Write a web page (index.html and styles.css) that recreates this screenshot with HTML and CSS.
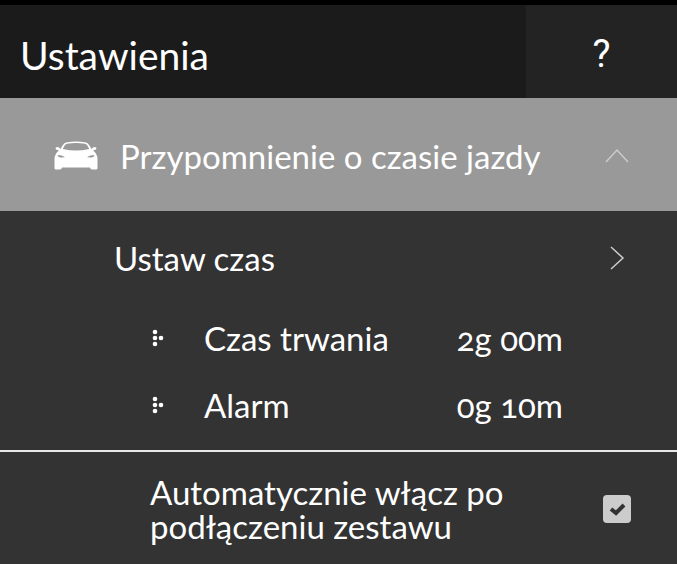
FILE: index.html
```html
<!DOCTYPE html>
<html lang="pl">

<head>
  <meta charset="UTF-8">
  <meta name="viewport" content="width=device-width, initial-scale=1.0">
  <title>Ustawienia</title>
  <link rel="stylesheet" href="styles.css">
</head>

<body>
  <header class="header">
    <h1>Ustawienia</h1>
    <button class="help" type="button">?</button>
  </header>

  <main>
    <button class="section-toggle" type="button" aria-expanded="true">
      <svg class="car" viewBox="0 0 44 30" aria-hidden="true">
        <path fill="#fff" fill-rule="evenodd" d="M12 1.500Q22 -.5 32 1.500Q34 2 35.500 4.500L37.500 8L39 6.500Q41 5.500 42.500 7L42 8.500L39 9.500Q43.500 13 43.500 18L43.500 27Q43.500 28.500 42 28.500L38 28.500Q36.500 28.500 36 26.500L8 26.500Q7.500 28.500 6 28.500L2 28.500Q.5 28.500 .5 27L.5 18Q.5 13 5 9.500L2 8.500L1.500 7Q3 5.500 5 6.500L6.500 8L8.500 4.500Q10 2 12 1.500ZM13 2.800Q11.500 3 10.300 5L8.800 8Q22 11 35.200 8L33.700 5Q32.500 3 31 2.800Q22 1.200 13 2.800ZM3.500 14Q4 16.500 6.500 16.500L11 16.300Q9 14.300 3.500 14ZM40.500 14Q35 14.300 33 16.300L37.500 16.500Q40 16.500 40.500 14Z"/>
      </svg>
      <span class="section-name">Przypomnienie o czasie jazdy</span>
      <svg class="chevron" viewBox="0 0 24 24" aria-hidden="true"><path d="M1 18L12 6L23 18"/></svg>
    </button>

    <section class="time">
      <button class="set-time" type="button">
        <span>Ustaw czas</span>
        <svg class="chevron" viewBox="0 0 24 24" aria-hidden="true"><path d="M6 1L18 12L6 23"/></svg>
      </button>
      <dl class="values">
        <div class="value-row">
          <svg class="dots" viewBox="0 0 12 18" aria-hidden="true"><circle cx="3" cy="3" r="2.300"/><circle cx="3" cy="9" r="2.300"/><circle cx="3" cy="15" r="2.300"/><circle cx="9" cy="9" r="2.300"/></svg>
          <dt>Czas trwania</dt>
          <dd>2g 00m</dd>
        </div>
        <div class="value-row">
          <svg class="dots" viewBox="0 0 12 18" aria-hidden="true"><circle cx="3" cy="3" r="2.300"/><circle cx="3" cy="9" r="2.300"/><circle cx="3" cy="15" r="2.300"/><circle cx="9" cy="9" r="2.300"/></svg>
          <dt>Alarm</dt>
          <dd>0g 10m</dd>
        </div>
      </dl>
    </section>

    <div class="auto">
      <label for="auto-on">Automatycznie włącz po podłączeniu zestawu</label>
      <span class="check">
        <input type="checkbox" id="auto-on" checked>
        <svg class="tick" viewBox="0 0 28 28" aria-hidden="true"><path d="M8 14L13 18L21 10"/></svg>
      </span>
    </div>
  </main>
</body>

</html>
```

FILE: styles.css
```css
* {
  box-sizing: border-box;
}

body {
  margin: 0;
  border-top: 5px solid #000;
  background-color: #333;
  color: #fff;
  font-family: Lato, "Liberation Sans", sans-serif;
  font-size: 33px;
  line-height: 34px;
  font-variant-numeric: oldstyle-nums;
}

button {
  border: none;
  background: none;
  color: inherit;
  font: inherit;
  cursor: pointer;
}

.header {
  display: flex;
  min-height: 93px;
  background-color: #1b1b1b;
}

h1 {
  flex: 1;
  align-self: center;
  margin: 0;
  padding: 6px 20px 0;
  font-size: 39px;
  font-weight: 400;
  line-height: 48px;
}

.help {
  width: 151px;
  padding: 4px 0 0;
  background-color: #232323;
  font-family: Roboto, sans-serif;
  font-size: 38px;
}

.section-toggle {
  display: flex;
  align-items: center;
  width: 100%;
  min-height: 113px;
  padding: 2px 48px 0 54px;
  background-color: #999;
  text-align: left;
}

.car {
  width: 44px;
  height: 30px;
}

.section-name {
  flex: 1;
  padding-left: 22px;
}

.chevron {
  width: 24px;
  height: 24px;
  fill: none;
  stroke: #ccc;
  stroke-width: 1.500;
}

.time {
  border-bottom: 2px solid #e8e8e8;
  padding-bottom: 12px;
}

.set-time {
  display: flex;
  align-items: center;
  justify-content: space-between;
  width: 100%;
  min-height: 93px;
  padding: 0 48px 0 114px;
  text-align: left;
}

.values {
  margin: 0;
  padding: 0 114px 0 152px;
}

.value-row {
  display: flex;
  align-items: center;
  min-height: 67px;
}

.dots {
  width: 12px;
  height: 18px;
  margin-right: 40px;
  fill: #fff;
}

dt {
  flex: 1;
}

dd {
  margin: 0;
}

.auto {
  display: flex;
  align-items: center;
  justify-content: space-between;
  min-height: 112px;
  padding: 2px 46px 0 150px;
}

.auto label {
  max-width: 380px;
}

.check {
  position: relative;
  width: 28px;
  height: 28px;
}

.check input {
  appearance: none;
  display: block;
  width: 28px;
  height: 28px;
  margin: 0;
  border-radius: 4px;
  background-color: #ccc;
}

.tick {
  display: none;
  position: absolute;
  inset: 0;
  fill: none;
  stroke: #333;
  stroke-width: 4;
  pointer-events: none;
}

.check input:checked + .tick {
  display: block;
}
```
